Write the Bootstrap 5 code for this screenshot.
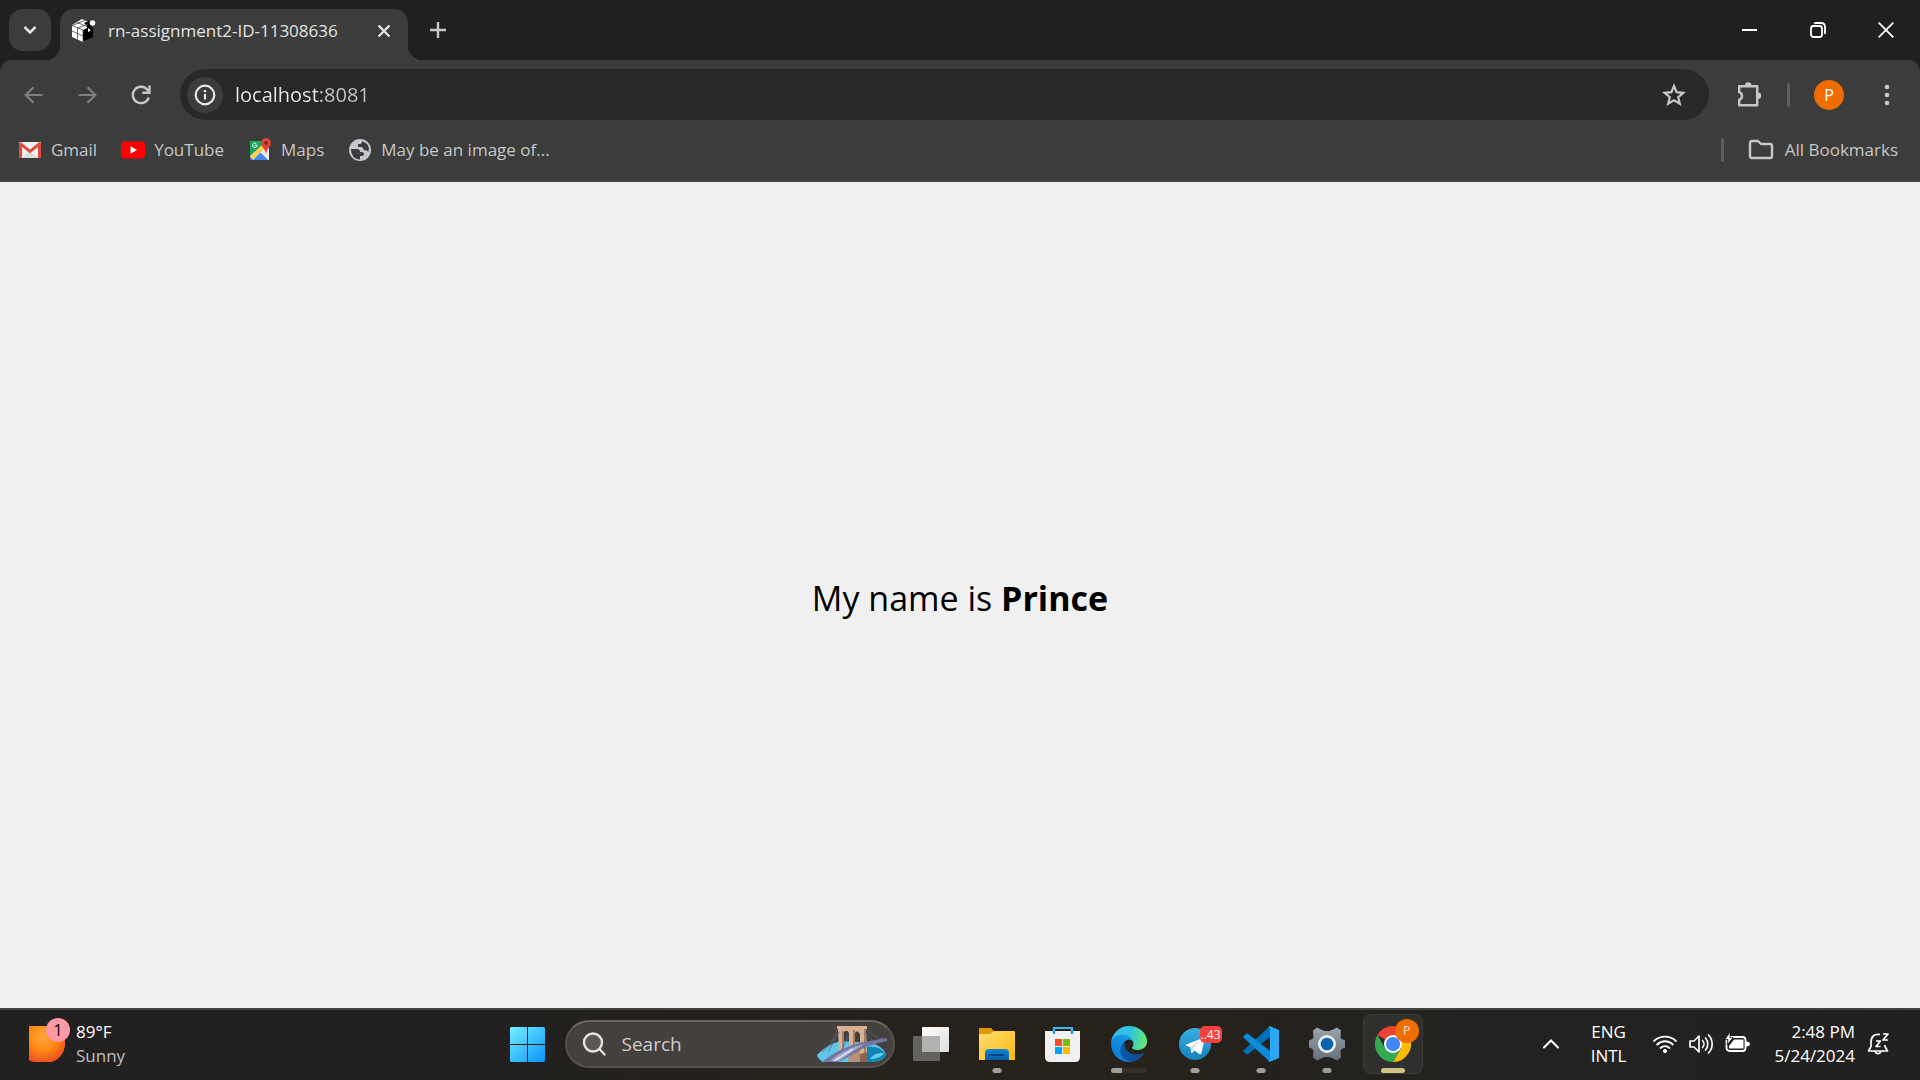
<!DOCTYPE html>
<html lang="en">
<head>
<meta charset="utf-8">
<meta name="viewport" content="width=device-width, initial-scale=1">
<title>rn-assignment2-ID-11308636</title>
<link rel="stylesheet" href="https://cdn.jsdelivr.net/npm/bootstrap@5.3.0/dist/css/bootstrap.min.css">
<style>
  body { font-family: "Open Sans", "Noto Sans", sans-serif; background: #f0f0f0; color: #000; }
  svg { display: block; flex: none; }
  button, a { color: inherit; text-decoration: none; }
  .plain-btn { border: 0; background: none; padding: 0; display: flex; align-items: center; justify-content: center; flex: none; }

  /* browser frame */
  .tabstrip { background: #1f2120; height: 60px; padding: 9px 0 0 9px; color: #e3e3e3; }
  .tab-search { width: 42px; height: 42px; border-radius: 14px; background: #3c3c3c; }
  .tab-open { position: relative; width: 348px; height: 51px; margin-left: 9px; padding: 0 17px 8px 12px; border-radius: 14px 14px 0 0; background: #3c3c3c; font-size: 17px; line-height: 24px; }
  .tab-open::before, .tab-open::after { content: ""; position: absolute; bottom: 0; width: 14px; height: 14px; }
  .tab-open::before { right: 100%; background: radial-gradient(circle at 0 0, transparent 14px, #3c3c3c 14px); }
  .tab-open::after { left: 100%; background: radial-gradient(circle at 100% 0, transparent 14px, #3c3c3c 14px); }
  .tab-new { width: 42px; height: 42px; margin-left: 9px; }
  .win-btn { width: 68px; height: 42px; color: #fff; }
  .frame-bg { background: #1f2120; }
  .toolbar-box { background: #3c3c3c; border-radius: 12px 12px 0 0; border-bottom: 2px solid #474747; }
  .navline { height: 69px; padding: 0 14px 0 6px; }
  .nav-btn { width: 54px; height: 42px; color: #c7c7c7; }
  .nav-btn:disabled { color: #7f7f7f; }
  .omnibox { height: 51px; border-radius: 26px; background: #282828; padding: 0 23px 0 7px; margin-left: 12px; }
  .site-info { width: 36px; height: 36px; border-radius: 50%; background: #3c3c3c; color: #e8e8e8; }
  .address { font-size: 20px; line-height: 28px; margin-left: 12px; padding: 0; border: 0; outline: 0; min-width: 0; color: transparent; background: linear-gradient(90deg, #ececec 84px, #c7c7c7 84px); -webkit-background-clip: text; background-clip: text; }
  .tools { gap: 24px; margin-left: 26px; }
  .vbar { width: 3px; height: 24px; border-radius: 2px; background: #5e5e5e; flex: none; }
  .avatar { width: 30px; height: 30px; border-radius: 50%; background: #ef6c00; color: #fff; font-size: 16px; }
  .bookline { height: 51px; padding: 0 22px 9px 18px; gap: 24px; font-size: 17px; line-height: 24px; color: #c7c7c7; }
  .bookline a { display: flex; align-items: center; gap: 9px; white-space: nowrap; }
  .bookline .all-marks { gap: 11px; }

  /* page */
  .greeting { font-size: 34px; line-height: 48px; padding-top: 6px; }

  /* taskbar */
  .taskbar { display: grid; grid-template-columns: 1fr auto 1fr; align-items: center; height: 72px; padding-bottom: 2px; border-top: 2px solid #444241; background: linear-gradient(90deg, #222120, #222120 25%, #26211a 45%, #26211a 60%, #222220 75%, #232120); color: #fff; font-size: 17px; line-height: 24px; }
  .weather { margin-left: 29px; gap: 11px; text-align: left; }
  .pip { position: absolute; border-radius: 50%; }
  .pip-alert { width: 24px; height: 24px; left: 17px; top: -8px; background: #ff99a4; color: #000; font-size: 16px; line-height: 24px; text-align: center; }
  .soft { color: #bfbfbf; }
  .searchbox { width: 330px; height: 48px; border-radius: 24px; border: 2px solid #55514e; border-top-color: #6a6664; background: #44403d; padding: 0 6px 0 15px; margin: 0 3px 0 4px; }
  .searchbox input { border: 0; outline: 0; background: none; color: #fff; padding: 0; font-size: 19px; line-height: 28px; flex: 1 1 0; min-width: 0; margin-left: 16px; }
  .searchbox input::placeholder { color: #cfcdcb; opacity: 1; }
  .task { position: relative; width: 60px; height: 60px; border-radius: 8px; margin: 0 3px; }
  .task-on { background: #2f2f2d; outline: 1px solid #3b3b39; outline-offset: -1px; }
  .task::after { content: ""; position: absolute; left: 50%; bottom: 1px; height: 5px; width: var(--run, 0); transform: translateX(-50%); border-radius: 3px; background: #a09e9b; }
  .run { --run: 9px; }
  .task-on::after { --run: 24px; background: #cfc388; }
  .task-group::after { --run: 36px; background: linear-gradient(90deg, #a09e9b 11px, #33302a 11px); }
  .pip-count { position: absolute; left: 35px; top: 12px; width: 22px; height: 17px; border-radius: 5px; background: #f8403c; color: #fff; font-size: 12px; line-height: 17px; text-align: center; }
  .pip-user { width: 24px; height: 24px; left: 32px; top: 5px; background: #ef6c00; color: #fde3cc; font-size: 12px; line-height: 24px; text-align: center; }
  .tray { padding-right: 29px; }
  .tray-icons { gap: 12px; margin: 0 24px 0 27px; }
  .clock { margin-right: 12px; }
</style>
<script src="https://cdn.jsdelivr.net/npm/bootstrap@5.3.0/dist/js/bootstrap.bundle.min.js"></script>
</head>
<body class="d-flex flex-column vh-100 overflow-hidden">

<header>
  <div class="tabstrip d-flex">
    <button class="plain-btn tab-search" aria-label="Search tabs">
      <svg width="14" height="10" viewBox="0 0 14 10" fill="none" stroke="currentColor" stroke-width="2.5"><path d="M1.500 2 7 7.500 12.500 2"/></svg>
    </button>
    <div class="tab-open d-flex align-items-center">
      <svg width="24" height="24" viewBox="0 0 24 24">
        <path d="M0 6 10 0l8 4v15l-7 4L0 18z" fill="#fff"/>
        <path d="M11 11l4-2V6l5 2 1 2v8l-10 5z" fill="#000"/>
        <path d="M12 4l5-2 4 4-5 2z" fill="#000"/>
        <path d="M0 6.500l11 4.500v12M0 12l11 5M5.500 9v11.500M5 3.500l10 4M0 6.500l13-5M6 9l10-4" fill="none" stroke="#444" stroke-width=".8"/>
        <circle cx="20.500" cy="4" r="2.800" fill="#fff"/><path d="M16 9l3 2.500-3 1.500z" fill="#fff"/>
      </svg>
      <span class="ms-2 ps-1 flex-grow-1 text-nowrap">rn-assignment2-ID-11308636</span>
      <button class="plain-btn" aria-label="Close tab">
        <svg width="14" height="14" viewBox="0 0 14 14" stroke="currentColor" stroke-width="2.400"><path d="M1.500 1.500l11 11M12.500 1.500l-11 11"/></svg>
      </button>
    </div>
    <button class="plain-btn tab-new" aria-label="New tab">
      <svg width="16" height="16" viewBox="0 0 16 16" stroke="#c7c7c7" stroke-width="2.400"><path d="M8 0v16M0 8h16"/></svg>
    </button>
    <div class="d-flex ms-auto">
      <button class="plain-btn win-btn" aria-label="Minimize"><svg width="16" height="16" viewBox="0 0 16 16"><path d="M0 7h15v2H0z" fill="#fff"/></svg></button>
      <button class="plain-btn win-btn" aria-label="Restore"><svg width="16" height="16" viewBox="0 0 16 16" fill="none" stroke="#fff" stroke-width="1.800"><rect x="1" y="4" width="11" height="11" rx="2.500"/><path d="M4 1.500Q5 1 6 1h5q4 0 4 4v5q0 1-.5 2"/></svg></button>
      <button class="plain-btn win-btn" aria-label="Close"><svg width="16" height="16" viewBox="0 0 16 16" stroke="#fff" stroke-width="1.800"><path d="M.7.7l14.600 14.600M15.300.7.7 15.300"/></svg></button>
    </div>
  </div>

  <div class="frame-bg">
    <div class="toolbar-box">
      <nav class="navline d-flex align-items-center" aria-label="Navigation">
        <button class="plain-btn nav-btn" disabled aria-label="Back"><svg width="19" height="18" viewBox="0 0 19 18" fill="none" stroke="currentColor" stroke-width="2.200"><path d="M18.500 9H2M9.500 1.200 1.700 9l7.800 7.800"/></svg></button>
        <button class="plain-btn nav-btn" disabled aria-label="Forward"><svg width="19" height="18" viewBox="0 0 19 18" fill="none" stroke="currentColor" stroke-width="2.200"><path d="M.5 9H17M9.500 1.200 17.300 9l-7.800 7.800"/></svg></button>
        <button class="plain-btn nav-btn" aria-label="Reload"><svg width="20" height="20" viewBox="0 0 20 20" fill="none" stroke="currentColor" stroke-width="2.400"><path d="M17.800 12.500A8.200 8.200 0 1 1 16.600 5L18 6.800"/><path d="M18.500.5v7.200h-7.200" /></svg></button>
        <div class="omnibox d-flex align-items-center flex-grow-1">
          <button class="plain-btn site-info" aria-label="View site information"><svg width="22" height="22" viewBox="0 0 22 22" fill="none" stroke="currentColor" stroke-width="2.200"><circle cx="11" cy="11" r="9.300"/><path d="M11 10v5.500M11 6v2.200"/></svg></button>
          <input class="address flex-grow-1" type="text" value="localhost:8081" aria-label="Address and search bar">
          <button class="plain-btn" aria-label="Bookmark this tab"><svg width="24" height="24" viewBox="0 0 24 24" fill="none" stroke="#c7c7c7" stroke-width="2.200"><path d="M12 3l2.600 6.200 6.700.6-5.100 4.400 1.600 6.600-5.800-3.500-5.800 3.500 1.600-6.600-5.100-4.400 6.700-.6z"/></svg></button>
        </div>
        <div class="tools d-flex align-items-center">
          <button class="plain-btn" aria-label="Extensions"><svg width="28" height="26" viewBox="0 0 28 26"><path d="M4.200 4.200h18v19h-18v-5.500a3.900 3.900 0 0 0 0-7.500z" fill="none" stroke="#c7c7c7" stroke-width="2.400" stroke-linejoin="round"/><path d="M10 3.500a3.200 3.200 0 0 1 6.400 0zM23 10.500a3.200 3.200 0 0 1 0 6.400z" fill="#c7c7c7"/></svg></button>
          <span class="vbar"></span>
          <button class="plain-btn avatar" aria-label="Profile">P</button>
          <button class="plain-btn px-3" aria-label="Menu"><svg width="6" height="22" viewBox="0 0 6 22" fill="#c7c7c7"><circle cx="3" cy="3" r="2.300"/><circle cx="3" cy="11" r="2.300"/><circle cx="3" cy="19" r="2.300"/></svg></button>
        </div>
      </nav>
      <nav class="bookline d-flex align-items-center" aria-label="Bookmarks">
        <a href="#"><svg width="24" height="24" viewBox="0 0 24 24"><path d="M1 4h22v16H1z" fill="#f1f1f1"/><path d="M4 20l8-7 8 7z" fill="#dcdcdc"/><path d="M1 20V5.500Q1 4 2.500 4L12 11.500 21.500 4Q23 4 23 5.500V20h-3V9l-8 6.300L4 9v11z" fill="#e04a3f"/></svg>Gmail</a>
        <a href="#"><svg width="24" height="24" viewBox="0 0 24 24"><rect y="3.500" width="24" height="17" rx="4" fill="#f00"/><path d="M9.500 8.300 16 12l-6.500 3.700z" fill="#fff"/></svg>YouTube</a>
        <a href="#"><svg width="24" height="24" viewBox="0 0 24 24"><path d="M2 3h19v19H2z" fill="#ececec"/><path d="M2 3h14v4L2 19z" fill="#1fa463"/><path d="M2 18 15 6l3 3L5 22H2z" fill="#ffd04b"/><path d="M5 22l7.500-7.500L20 22z" fill="#4285f4"/><path d="M2 19v3h3z" fill="#1a73e8"/><path d="M18 0a5 5 0 0 1 5 5c0 4-4 5-5 11-1-6-5-7-5-11a5 5 0 0 1 5-5z" fill="#db4437"/><circle cx="18" cy="5" r="1.800" fill="#7b231e"/><path d="M9 7.300H6.800M8.400 5.800A2.200 2.200 0 1 0 9 7.500" stroke="#fff" fill="none"/></svg>Maps</a>
        <a href="#"><svg width="24" height="24" viewBox="0 0 24 24"><circle cx="12" cy="12" r="11" fill="#c4c7cc"/><path d="M3 11h6q3 0 3 3h2q2 0 2 2t-2 2h-2v3.500Q3 21 3 11zM14 3.200q0 2.800-2.500 2.800H10v3h3q2 0 3 3 3 0 4.500 2Q23 6 14 3.200z" fill="#3c3c3c"/></svg>May be an image of...</a>
        <span class="vbar ms-auto"></span>
        <a class="all-marks" href="#"><svg width="26" height="22" viewBox="0 0 26 22" fill="none" stroke="#c7c7c7" stroke-width="2.400" stroke-linejoin="round"><path d="M2 4q0-2 2-2h6l3 3h9q2 0 2 2v10q0 2-2 2H4q-2 0-2-2z"/></svg>All Bookmarks</a>
      </nav>
    </div>
  </div>
</header>

<main class="flex-grow-1 d-flex align-items-center justify-content-center">
  <p class="greeting m-0">My name is <b>Prince</b></p>
</main>

<footer class="taskbar">
  <button class="plain-btn weather justify-content-start">
    <span class="position-relative">
      <svg width="36" height="36" viewBox="0 0 36 36"><defs><radialGradient id="sun" cx=".4" cy=".3" r=".85"><stop offset="0" stop-color="#ffa63c"/><stop offset=".45" stop-color="#ff8a14"/><stop offset="1" stop-color="#e53a22"/></radialGradient></defs><path d="M0 0h36v20q-2 12-13 16H5q-3 0-5-2z" fill="url(#sun)"/></svg>
      <span class="pip pip-alert">1</span>
    </span>
    <span>89°F<br><span class="soft">Sunny</span></span>
  </button>

  <div class="d-flex align-items-center">
    <button class="plain-btn task" aria-label="Start"><svg width="35" height="35" viewBox="0 0 35 35"><defs><linearGradient id="win" x1="0" y1="0" x2="35" y2="35" gradientUnits="userSpaceOnUse"><stop stop-color="#75f0ff"/><stop offset="1" stop-color="#0a93ff"/></linearGradient></defs><path d="M1 0h16v17H0V1zM18 0h16l1 1v16H18zM0 18h17v17H1l-1-1zM18 18h17v16l-1 1H18z" fill="url(#win)"/></svg></button>
    <label class="searchbox d-flex align-items-center">
      <svg width="24" height="24" viewBox="0 0 24 24" fill="none" stroke="#e6e4e2" stroke-width="2.400" stroke-linecap="round"><circle cx="11" cy="10.500" r="9" fill="#5a5755"/><path d="M17.500 17l5 5.500"/></svg>
      <input type="text" placeholder="Search" aria-label="Search">
      <svg width="70" height="38" viewBox="0 0 70 38">
        <path d="M0 30Q10 19 24 16l30 2q12 3 15 11-2 8-17 8H6q-5-3-6-7z" fill="#5fc6e6"/>
        <path d="M50 22q12-2 19 7-2 8-19 8z" fill="#0f86b6"/><path d="M53 34q4-7 14-6-4 6-14 6z" fill="#62cfea"/>
        <path d="M33 26l17-7v18H31z" fill="#b98f75"/><path d="M43 25l7-4v16h-7z" fill="#8d6450"/>
        <path d="M20 1h30v3h-1l1 23-7 2V9q-3-5-5-1v18l-6 2V8q-2-4-5-1v16l-5 3-1-22h-1z" fill="#d9b195"/><path d="M47 4h2v23l-2 1zM36 5h2v20l-2 1zM25 6h2v17l-2 1z" fill="#a67b63"/>
        <path d="M6 36Q24 22 46 17l24-4v3q-20 4-30 11L22 37H8z" fill="#7476a2"/><path d="M13 36Q26 25 40 21l8-2-10 6-16 11z" fill="#a7a9cb"/><path d="M17 36 36 24" stroke="#eceefa" stroke-width="1.200"/>
        <path d="M20 5Q15 20 5 27M22 7 11 27M32 9l-7 16M49 4q6 8 18 10M49 8l7 8" fill="none" stroke="#56658a" stroke-width=".8"/>
      </svg>
    </label>
    <button class="plain-btn task" aria-label="Task view"><svg width="36" height="34" viewBox="0 0 36 34"><defs><linearGradient id="tv" x2="1" y2="1"><stop stop-color="#fff"/><stop offset="1" stop-color="#dcdcdc"/></linearGradient></defs><rect x="9" width="27" height="25" rx="1" fill="url(#tv)"/><rect y="9" width="27" height="25" rx="1" fill="#626261"/><path d="M9 9h18v16H9z" fill="#b1b1b0"/></svg></button>
    <button class="plain-btn task run" aria-label="File Explorer"><svg width="36" height="34" viewBox="0 0 36 34"><defs><linearGradient id="fo" x2="1" y2="1"><stop stop-color="#ffdd72"/><stop offset="1" stop-color="#ffb90f"/></linearGradient><linearGradient id="fb" y2="1" x2="0"><stop stop-color="#0f83d6"/><stop offset="1" stop-color="#0860a8"/></linearGradient></defs><path d="M0 2q0-1 1-1h11l3 3v5H0z" fill="#dd9a05"/><path d="M0 7h11l4-3h20q1 0 1 1v28H0z" fill="url(#fo)"/><path d="M6 33V26q0-4 4-4h16q4 0 4 4v7z" fill="url(#fb)"/><rect x="10" y="27" width="15" height="2" rx="1" fill="#064579"/></svg></button>
    <button class="plain-btn task" aria-label="Microsoft Store"><svg width="36" height="36" viewBox="0 0 36 36"><path d="M9 8V2h18v6" fill="none" stroke="#35b9f2" stroke-width="2.200"/><path d="M0 5h35v26q0 5-5 5H5q-5 0-5-5z" fill="#f1f1f1"/><path d="M9 5v3M27 5v3" stroke="#1797d6" stroke-width="2.200"/><path d="M10 13h7v7h-7z" fill="#f25022"/><path d="M18 13h7v7h-7z" fill="#7fba00"/><path d="M10 21h7v7h-7z" fill="#00a4ef"/><path d="M18 21h7v7h-7z" fill="#ffb900"/></svg></button>
    <button class="plain-btn task task-group" aria-label="Microsoft Edge"><svg width="36" height="36" viewBox="0 0 256 256"><defs><linearGradient id="e1" x1="60" y1="178" x2="236" y2="178" gradientUnits="userSpaceOnUse"><stop stop-color="#0c59a4"/><stop offset="1" stop-color="#114a8b"/></linearGradient><linearGradient id="e2" x1="150" y1="90" x2="40" y2="220" gradientUnits="userSpaceOnUse"><stop stop-color="#1b9de2"/><stop offset="1" stop-color="#0f7bd5"/></linearGradient><linearGradient id="e3" x1="20" y1="60" x2="250" y2="120" gradientUnits="userSpaceOnUse"><stop stop-color="#35c1f1"/><stop offset=".45" stop-color="#2cc3df"/><stop offset="1" stop-color="#66eb6e"/></linearGradient></defs>
      <path d="M231 190.500a94 94 0 0 1-10.500 4.700 102 102 0 0 1-36 6.500c-47.400 0-88.700-32.600-88.700-74.500a31.500 31.500 0 0 1 16.400-27.300c-42.900 1.800-53.900 46.500-53.900 72.700 0 74 68.200 81.600 82.900 81.600 7.900 0 19.900-2.300 27-4.600l1.300-.4a128.300 128.300 0 0 0 66.600-52.800 4 4 0 0 0-5.100-5.900z" fill="url(#e1)"/>
      <path d="M105.700 241.400a79.200 79.200 0 0 1-22.700-21.300 80.700 80.700 0 0 1 29.500-120c3.200-1.500 8.500-4.100 15.600-4a32.400 32.400 0 0 1 25.700 13 31.900 31.900 0 0 1 6.300 18.700c0-.2 24.500-79.600-80-79.600-43.900 0-80 41.700-80 78.200a130.200 130.200 0 0 0 12.100 56 128 128 0 0 0 156.400 67 75.500 75.500 0 0 1-62.800-8z" fill="url(#e2)"/>
      <path d="M152.300 148.900c-.8 1-3.300 2.500-3.300 5.700 0 2.600 1.700 5.100 4.700 7.200 14.400 10 41.500 8.700 41.600 8.700a59.600 59.600 0 0 0 30.300-8.300A61.400 61.400 0 0 0 256 109.100c.3-22.400-8-37.300-11.300-43.900C223.500 23.900 177.700 0 128 0A128 128 0 0 0 0 126.200c.5-36.500 36.800-66 80-66 3.500 0 23.500.3 42 10a72.600 72.600 0 0 1 30.900 29.300c6.100 10.600 7.200 24.100 7.200 29.500s-2.700 13.300-7.800 19.900z" fill="url(#e3)"/></svg></button>
    <button class="plain-btn task run" aria-label="Telegram"><svg width="32" height="32" viewBox="0 0 32 32"><defs><linearGradient id="tg" x2="0" y2="1"><stop stop-color="#37aee2"/><stop offset="1" stop-color="#1482bd"/></linearGradient></defs><circle cx="16" cy="16" r="16" fill="url(#tg)"/><path d="M6 17 24 10q2-.5 1.500 1.500L22.500 25q-.7 2-2.500.8l-4.500-3.300-2.200 2.200q-1 .8-1.200-.7l-.8-4.800z" fill="#fff"/><path d="M11.500 19 21 12.500l-7 7.500-1 4.500z" fill="#c0dcea"/></svg><span class="pip-count">..43</span></button>
    <button class="plain-btn task run" aria-label="Visual Studio Code"><svg width="36" height="36" viewBox="0 0 36 36"><path d="M27 0 1 24q-1.500 1.200 0 2.500l2 1.500q1 .8 2.300 0L27 11z" fill="#0070b8"/><path d="M27 36 1 12Q-.5 10.800 1 9.500L3 8q1-.8 2.300 0L27 25z" fill="#0a8cd8"/><path d="M26.500 0 36 4v28l-9.500 4Q25 36 27 33V3q-2-3-.5-3z" fill="#29a9f3"/></svg></button>
    <button class="plain-btn task run" aria-label="Settings"><svg width="36" height="36" viewBox="0 0 36 36"><defs><linearGradient id="gr" x2="0" y2="1"><stop stop-color="#9aa3ac"/><stop offset="1" stop-color="#66707a"/></linearGradient></defs><path d="M8 1.500 13 4h2l-1 1h8l-1-1h2l5-2.500 4 3-.5 6.500 1 2 4 1.500v7l-4 1.500-1 2 .5 6.500-4 3L23 32h-2l1-1h-8l1 1h-2l-5 2.500-4-3L4.500 25l-1-2L0 21.500v-7L3.500 13l1-2L4 4.500z" fill="url(#gr)" stroke-linejoin="round"/><circle cx="18" cy="18" r="9" fill="#eceff1"/><circle cx="18" cy="18" r="6.300" fill="#0c62ad"/></svg></button>
    <button class="plain-btn task task-on" aria-label="Google Chrome"><svg width="36" height="36" viewBox="0 0 48 48"><path d="M24 24 3.200 12A24 24 0 0 1 44.800 12z" fill="#ea4335"/><path d="M24 12h20.800A24 24 0 0 1 24 48l10.400-18z" fill="#fbbc04"/><path d="M3.200 12A24 24 0 0 0 24 48l10.400-18H13.600z" fill="#34a853"/><circle cx="24" cy="24" r="12" fill="#fff"/><circle cx="24" cy="24" r="9.500" fill="#4285f4"/></svg><span class="pip pip-user">P</span></button>
  </div>

  <div class="tray d-flex align-items-center justify-content-end">
    <button class="plain-btn" aria-label="Show hidden icons"><svg width="16" height="10" viewBox="0 0 16 10" fill="none" stroke="#fff" stroke-width="2" stroke-linecap="round"><path d="M1 8.500 8 1.500l7 7"/></svg></button>
    <button class="plain-btn ms-4 ps-2">ENG<br>INTL</button>
    <div class="tray-icons d-flex">
      <svg width="24" height="24" viewBox="0 0 24 24" fill="none" stroke="#fff" stroke-width="1.800" stroke-linecap="round"><path d="M1 9a16 16 0 0 1 22 0M4.200 12.500a11 11 0 0 1 15.600 0M7.500 16a6.500 6.500 0 0 1 9 0"/><circle cx="12" cy="19" r="1.600" fill="#fff" stroke-width="1"/></svg>
      <svg width="24" height="24" viewBox="0 0 24 24" fill="none" stroke="#fff" stroke-width="1.700" stroke-linecap="round" stroke-linejoin="round"><path d="M1 9h4l5-5v16l-5-5H1zM13.500 8.500a5 5 0 0 1 0 7M16.500 6a9 9 0 0 1 0 12M19.500 3a13 13 0 0 1 0 18"/></svg>
      <svg width="25" height="24" viewBox="0 0 25 24"><rect x="1.500" y="5" width="19" height="14" rx="3" fill="none" stroke="#fff" stroke-width="1.800"/><path d="M4 16.500V14l5-6.500h9.500v9z" fill="#fff"/><path d="M21 9.500q4 0 4 2.500t-4 2.500z" fill="#fff"/><path d="M5 0 0 7.500h3L2 13l6-7.500H5z" fill="#fff" stroke="#23211f" stroke-width=".8"/></svg>
    </div>
    <button class="plain-btn text-end clock">2:48 PM<br>5/24/2024</button>
    <svg width="24" height="24" viewBox="0 0 24 24" fill="none" stroke="#fff" stroke-width="1.700" stroke-linejoin="round"><path d="M13 2.500q-9-1-9 8v4L1.500 19h19L18 14.500V13M8 19.500a3.200 3.200 0 0 0 6 0M9 9h4.500L9 14.500h4.500M16 2h5l-5 6h5"/></svg>
  </div>
</footer>
</body>
</html>
